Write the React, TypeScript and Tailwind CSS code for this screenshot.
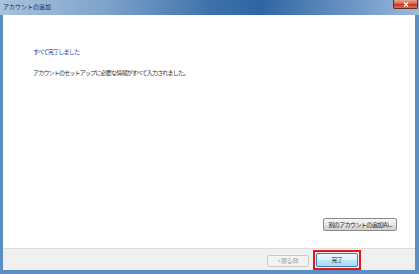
import React from 'react';

const jp = { fontFamily: '"Noto Sans CJK JP", "Noto Sans", sans-serif' };

const App: React.FC = () => {
    return (
        <div className="w-[419px] h-[274px] flex flex-col bg-[#5b8fc4] overflow-hidden" style={jp}>
            {/* Title bar */}
            <div className="relative h-[15px] shrink-0 bg-[linear-gradient(90deg,#a9c2de_0%,#7fa3cb_25%,#3f72ab_50%,#2f65a3_62%,#6f97c5_85%,#9dbbdc_100%)]">
                <span className="absolute left-[3px] top-[3px] text-[6px] leading-[8px] text-[#1a2a3c]">アカウントの追加</span>
                {/* close button */}
                <div className="absolute right-[1px] top-0 w-[25px] h-[9px] rounded-b-[2px] border border-t-0 border-[#6d2a22] bg-[linear-gradient(180deg,#e9a493_0%,#d8664f_45%,#c23a22_55%,#d9704f_100%)] flex items-center justify-center">
                    <svg width="6" height="5" viewBox="0 0 6 5">
                        <path d="M1 0.5 L5 4.5 M5 0.5 L1 4.5" stroke="#fff" strokeWidth="1.3" />
                    </svg>
                </div>
            </div>

            {/* Body */}
            <div className="flex-1 flex flex-col ml-[3px] mr-[4px] mb-[4px] bg-white">
                <div className="flex-1 flex flex-col pl-[30px] pr-[18px] pt-[33px]">
                    <div className="text-[6px] tracking-[-0.8px] leading-[8px] text-[#2443ad]">すべて完了しました</div>
                    <div className="mt-[13px] text-[6px] tracking-[-0.8px] leading-[8px] text-[#333]">アカウントのセットアップに必要な情報がすべて入力されました。</div>
                    <div className="flex-1" />
                    <div className="flex justify-end pb-[17px]">
                        <div className="w-[74px] h-[13px] rounded-[2px] border border-[#8a8a8a] bg-[linear-gradient(180deg,#f4f4f4_0%,#ebebeb_50%,#dcdcdc_51%,#d2d2d2_100%)] flex items-center justify-center text-[6px] tracking-[-0.6px] text-[#222]">
                            別のアカウントの追加(A)...
                        </div>
                    </div>
                </div>
                {/* Footer */}
                <div className="h-[22px] shrink-0 bg-[#f0f0f0] border-t border-[#dcdcdc] flex items-center justify-end pr-[54px] gap-[4px]">
                    <div className="w-[42px] h-[12px] mt-[2px] rounded-[2px] border border-[#c8c8c8] bg-[#f4f4f4] flex items-center justify-center text-[6px] tracking-[-0.6px] text-[#9a9a9a]">
                        &lt; 戻る(B)
                    </div>
                    <div className="relative w-[48px] h-[20px] border-2 border-[#e8141b] flex items-center justify-center">
                        <div className="w-[42px] h-[14px] rounded-[2px] border border-[#3c7fb1] bg-[linear-gradient(180deg,#eaf6fd_0%,#d9f0fc_50%,#bee6fd_51%,#a7d9f5_100%)] flex items-center justify-center text-[6px] tracking-[-0.6px] text-[#222]">
                            完了
                        </div>
                    </div>
                </div>
            </div>
        </div>
    );
};

export default App;
